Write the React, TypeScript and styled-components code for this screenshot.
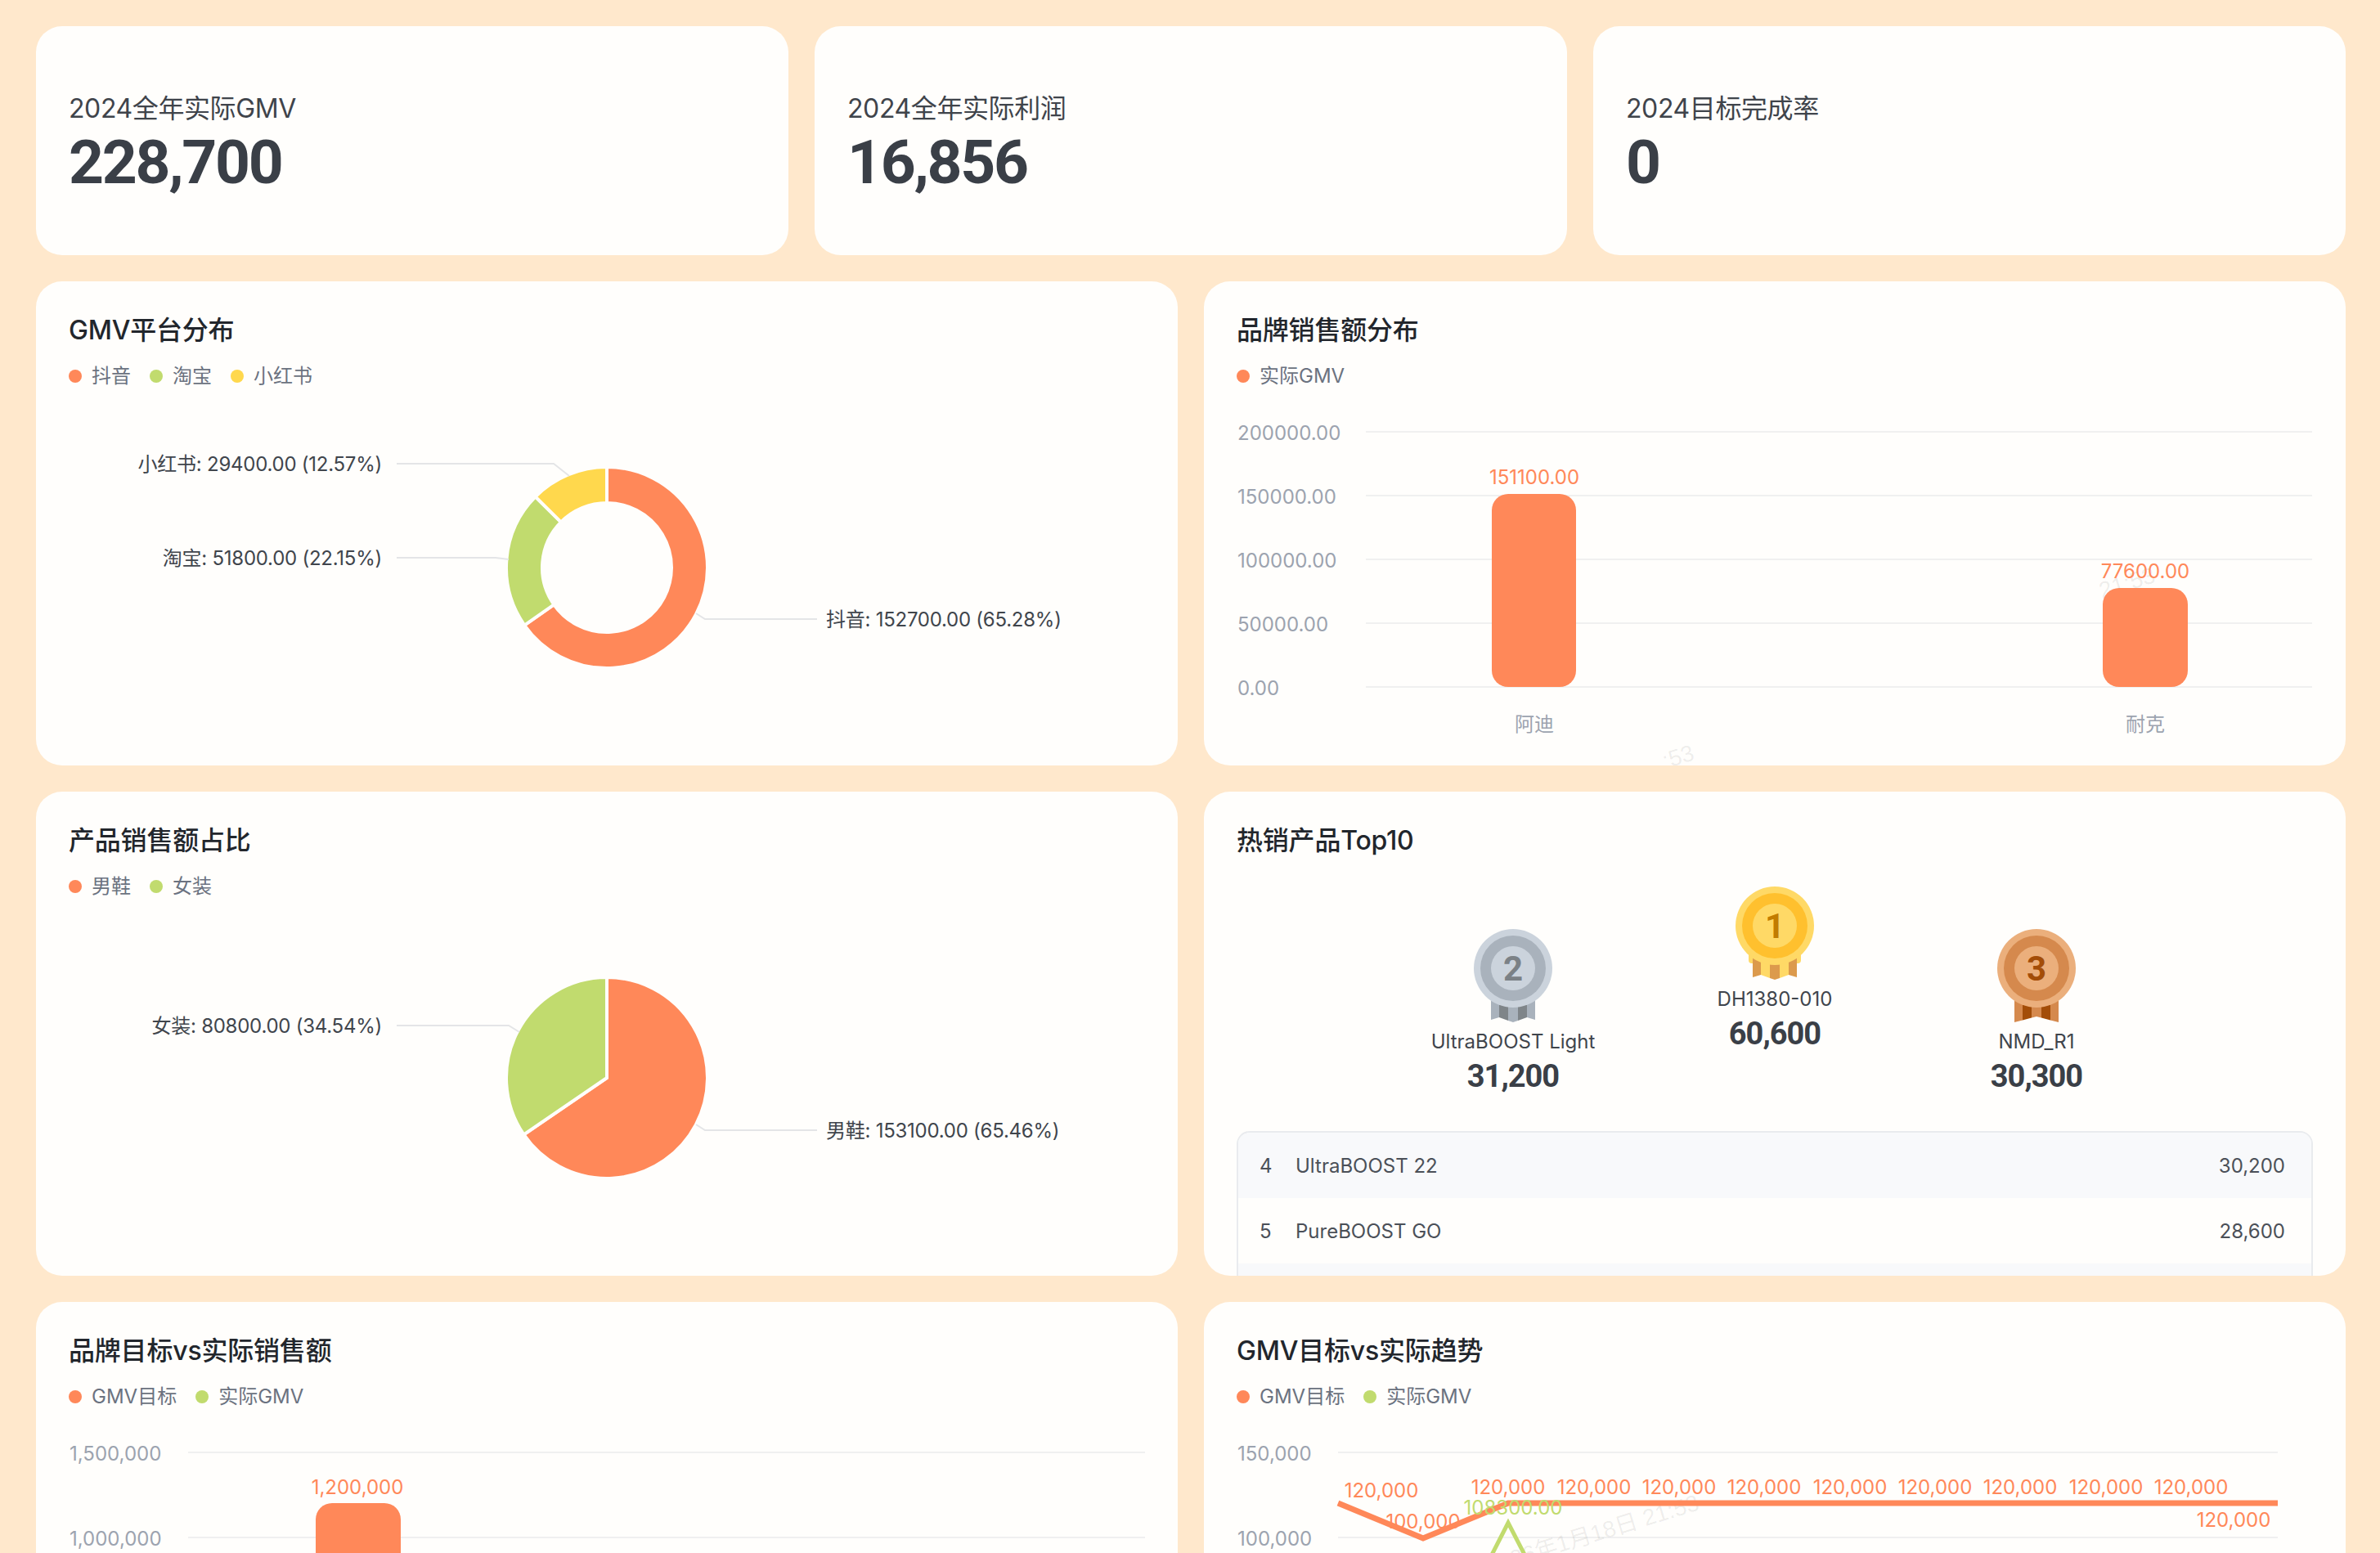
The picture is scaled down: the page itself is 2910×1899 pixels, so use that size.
import React from 'react';
import styled, { createGlobalStyle } from 'styled-components';

const ORANGE = '#ff8859';
const GREEN = '#c1db6e';
const YELLOW = '#ffd84d';
const CARD_BG = '#fffefc';
const FONT = 'Inter, "Noto Sans CJK SC", sans-serif';

const GlobalStyle = createGlobalStyle`
  html, body {
    margin: 0;
    padding: 0;
    height: 1899px;
    overflow: hidden;
    background: #ffe8cc;
    font-family: ${FONT};
  }
`;

const Page = styled.div`
  height: 1899px;
  overflow: hidden;
  box-sizing: border-box;
  padding: 32px 42px 0 44px;
  display: flex;
  flex-direction: column;
  gap: 32px;
`;

const StatRow = styled.div`
  display: grid;
  grid-template-columns: repeat(3, 920px);
  gap: 32px;
`;

const StatCard = styled.div`
  height: 280px;
  box-sizing: border-box;
  padding: 79px 40px 0;
  border-radius: 32px;
  background: ${CARD_BG};
`;

const StatLabel = styled.div`
  font-size: 32px;
  line-height: 44px;
  letter-spacing: -0.4px;
  color: #3f444b;
`;

const StatValue = styled.div`
  font-family: Roboto, sans-serif;
  font-weight: 700;
  font-size: 75px;
  line-height: 86px;
  letter-spacing: -2.3px;
  color: #3a3f47;
`;

const ChartGrid = styled.div`
  display: grid;
  grid-template-columns: repeat(2, 1396px);
  grid-auto-rows: 592px;
  gap: 32px;
`;

const ChartCard = styled.section`
  position: relative;
  box-sizing: border-box;
  padding: 38px 40px 0;
  border-radius: 32px;
  background: ${CARD_BG};
  overflow: hidden;
`;

const CardTitle = styled.h3`
  margin: 0;
  font-size: 32px;
  line-height: 44px;
  font-weight: 500;
  letter-spacing: -0.2px;
  color: #22262c;
`;

const Legend = styled.div`
  display: flex;
  gap: 23px;
  margin-top: 18px;
  height: 32px;
`;

const LegendItem = styled.div`
  display: flex;
  align-items: center;
  gap: 12px;
  font-size: 24px;
  line-height: 32px;
  color: #6b7280;
`;

const LegendDot = styled.span<{ $color: string }>`
  width: 16px;
  height: 16px;
  border-radius: 50%;
  background: ${(p) => p.$color};
`;

const ChartSvg = styled.svg`
  display: block;
  margin: 0 -40px;
  width: 1396px;
  height: 460px;
`;

const SliceLabel = styled.text`
  font-size: 24px;
  letter-spacing: -0.25px;
  fill: #40454c;
  dominant-baseline: central;
`;

const AxisLabel = styled.text`
  font-size: 24px;
  fill: #9ca3af;
  dominant-baseline: central;
  transform: translateY(1px);
`;

const ValueLabel = styled.text<{ $color?: string }>`
  font-size: 24px;
  fill: ${(p) => p.$color || ORANGE};
  text-anchor: middle;
  dominant-baseline: central;
`;

const WatermarkText = styled.text`
  font-family: "Liberation Sans", "Noto Sans CJK SC", sans-serif;
  font-size: 28px;
  fill: rgba(0, 0, 0, 0.08);
`;

const Podium = styled.div`
  display: flex;
  justify-content: center;
  align-items: flex-start;
  margin: 34px 0 45px;
`;

const PodiumItem = styled.div<{ $lowered?: boolean }>`
  width: 320px;
  margin-top: ${(p) => (p.$lowered ? '52px' : '0')};
  display: flex;
  flex-direction: column;
  align-items: center;
`;

const PodiumName = styled.div`
  margin-top: 8px;
  font-size: 24px;
  line-height: 32px;
  color: #40454c;
`;

const PodiumValue = styled.div`
  margin-top: 4px;
  font-family: Roboto, sans-serif;
  font-weight: 700;
  font-size: 38px;
  line-height: 44px;
  letter-spacing: -1px;
  color: #3a3f47;
`;

const RankTable = styled.div`
  border: 2px solid #e9ebee;
  border-radius: 16px;
  overflow: hidden;
`;

const RankRow = styled.div<{ $striped?: boolean }>`
  height: 80px;
  padding: 0 32px 0 26px;
  display: flex;
  align-items: center;
  font-size: 24px;
  color: #4b5058;
  background: ${(p) => (p.$striped ? '#f8f9fb' : CARD_BG)};
`;

const RankNumber = styled.span`
  width: 44px;
`;

const RankName = styled.span`
  flex: 1;
`;

type MedalTheme = {
  outer: string;
  mid: string;
  digit: string;
  ribbon: string;
  stripe: string;
  notched?: boolean;
  tab?: boolean;
};

const GOLD: MedalTheme = { outer: '#ffd966', mid: '#ffc02e', digit: '#c27c00', ribbon: '#dc9a4c', stripe: '#ffd966', tab: true };
const SILVER: MedalTheme = { outer: '#cbd3dc', mid: '#a9b2bc', digit: '#7b8186', ribbon: '#a9b2bc', stripe: '#7f8589' };
const BRONZE: MedalTheme = { outer: '#ebaf7c', mid: '#d5894d', digit: '#a34d08', ribbon: '#d5894d', stripe: '#a34d08', notched: true };

// bottom edge of the ribbon, either pointing down in the middle or cut upwards
const ribbonBottom = (x: number, notched?: boolean) => {
  if (notched) return 114 - (7 * (48 - Math.abs(x - 48) - 21)) / 27;
  const d = Math.abs(x - 48);
  if (d > 17) return 108 + ((d - 17) / 10) * 3;
  return 114 - (d / 17) * 6;
};

const Medal: React.FC<{ rank: number; theme: MedalTheme }> = ({ rank, theme }) => {
  const edges = [21, 31, 42, 54, 65, 75];
  return (
    <svg width="96" height="114" viewBox="0 0 96 114">
      {theme.tab && <rect x="16" y="70" width="64" height="24" rx="4" fill={theme.outer} />}
      {edges.slice(0, 5).map((x, i) => {
        const next = edges[i + 1];
        const mid = i === 2 ? ` 48,${ribbonBottom(48, theme.notched)}` : '';
        return (
          <polygon
            key={x}
            points={`${x},70 ${next},70 ${next},${ribbonBottom(next, theme.notched)}${mid} ${x},${ribbonBottom(x, theme.notched)}`}
            fill={i % 2 === 0 ? theme.ribbon : theme.stripe}
          />
        );
      })}
      <circle cx="48" cy="48" r="48" fill={theme.outer} />
      <circle cx="48" cy="48" r="40" fill={theme.mid} />
      <circle cx="48" cy="48" r="27" fill={theme.outer} />
      <text x="48" y="63" textAnchor="middle" fontFamily="Roboto, sans-serif" fontWeight="700" fontSize="42" fill={theme.digit}>
        {rank}
      </text>
    </svg>
  );
};

const polar = (cx: number, cy: number, r: number, fraction: number) => {
  const a = fraction * 2 * Math.PI;
  return [cx + r * Math.sin(a), cy - r * Math.cos(a)];
};

const slicePath = (cx: number, cy: number, outer: number, inner: number, from: number, to: number) => {
  const large = to - from > 0.5 ? 1 : 0;
  const [x1, y1] = polar(cx, cy, outer, from);
  const [x2, y2] = polar(cx, cy, outer, to);
  if (inner === 0) return `M${cx} ${cy}L${x1} ${y1}A${outer} ${outer} 0 ${large} 1 ${x2} ${y2}Z`;
  const [x3, y3] = polar(cx, cy, inner, to);
  const [x4, y4] = polar(cx, cy, inner, from);
  return `M${x1} ${y1}A${outer} ${outer} 0 ${large} 1 ${x2} ${y2}L${x3} ${y3}A${inner} ${inner} 0 ${large} 0 ${x4} ${y4}Z`;
};

type Slice = {
  color: string;
  share: number;
  text: string;
  line: string;
  labelX: number;
  labelY: number;
  anchor: 'start' | 'end';
};

const PieChart: React.FC<{ top: number; inner: number; cy: number; slices: Slice[] }> = ({ top, inner, cy, slices }) => {
  let acc = 0;
  return (
    <ChartSvg viewBox={`44 ${top + 132} 1396 460`}>
      {slices.map((s) => {
        const from = acc;
        acc += s.share;
        return (
          <path
            key={s.text}
            d={slicePath(742, cy, 123, inner, from, acc)}
            fill={s.color}
            stroke={CARD_BG}
            strokeWidth="4"
          />
        );
      })}
      {slices.map((s) => (
        <React.Fragment key={s.text}>
          <polyline points={s.line} fill="none" stroke="#e4e5e7" strokeWidth="2" />
          <SliceLabel x={s.labelX} y={s.labelY} textAnchor={s.anchor}>
            {s.text}
          </SliceLabel>
        </React.Fragment>
      ))}
    </ChartSvg>
  );
};

const GridLine: React.FC<{ x1: number; x2: number; y: number }> = ({ x1, x2, y }) => (
  <line x1={x1} x2={x2} y1={y} y2={y} stroke="#f0f0f0" strokeWidth="2" />
);

const BrandBars = () => (
  <ChartSvg viewBox={`1472 476 1396 460`}>
    {[
      ['200000.00', 528],
      ['150000.00', 606],
      ['100000.00', 684],
      ['50000.00', 762],
      ['0.00', 840],
    ].map(([label, y]) => (
      <React.Fragment key={label}>
        <AxisLabel x={1513} y={y}>{label}</AxisLabel>
        <GridLine x1={1670} x2={2827} y={y as number} />
      </React.Fragment>
    ))}
    <WatermarkText x="2570" y="732" transform="rotate(-17 2570 732)">21:53</WatermarkText>
    <WatermarkText x="2036" y="940" transform="rotate(-17 2036 940)">:53</WatermarkText>
    <rect x="1824" y="604" width="103" height="236" rx="20" fill={ORANGE} />
    <rect x="2571" y="719" width="104" height="121" rx="20" fill={ORANGE} />
    <ValueLabel x={1876} y={583}>151100.00</ValueLabel>
    <ValueLabel x={2623} y={698}>77600.00</ValueLabel>
    <AxisLabel x={1876} y={884} textAnchor="middle">阿迪</AxisLabel>
    <AxisLabel x={2623} y={884} textAnchor="middle">耐克</AxisLabel>
  </ChartSvg>
);

const TargetBars = () => (
  <ChartSvg viewBox={`44 1724 1396 460`}>
    <AxisLabel x={85} y={1776}>1,500,000</AxisLabel>
    <AxisLabel x={85} y={1880}>1,000,000</AxisLabel>
    <GridLine x1={230} x2={1400} y={1776} />
    <GridLine x1={230} x2={1400} y={1880} />
    <rect x="386" y="1838" width="104" height="300" rx="20" fill={ORANGE} />
    <ValueLabel x={437} y={1818}>1,200,000</ValueLabel>
  </ChartSvg>
);

const TREND_X = [1844, 1949, 2053, 2157, 2262, 2366, 2470, 2575, 2679];

const TrendLines = () => (
  <ChartSvg viewBox={`1472 1724 1396 460`}>
    <AxisLabel x={1513} y={1776}>150,000</AxisLabel>
    <AxisLabel x={1513} y={1880}>100,000</AxisLabel>
    <GridLine x1={1636} x2={2785} y={1776} />
    <GridLine x1={1636} x2={2785} y={1880} />
    <WatermarkText x="1820" y="1925" transform="rotate(-17 1820 1925)">2026年1月18日 21:53</WatermarkText>
    <polyline points="1740,2066 1844,1862 1949,2066" fill="none" stroke={GREEN} strokeWidth="5" />
    <polyline points="1636,1838 1740,1881 1844,1838 2785,1838" fill="none" stroke={ORANGE} strokeWidth="7" />
    <ValueLabel x={1689} y={1822}>120,000</ValueLabel>
    <ValueLabel x={1740} y={1860}>100,000</ValueLabel>
    {TREND_X.map((x) => (
      <ValueLabel key={x} x={x} y={1818}>120,000</ValueLabel>
    ))}
    <ValueLabel x={2731} y={1858}>120,000</ValueLabel>
    <ValueLabel x={1850} y={1843} $color={GREEN}>108300.00</ValueLabel>
  </ChartSvg>
);

const LegendRow: React.FC<{ items: [string, string][] }> = ({ items }) => (
  <Legend>
    {items.map(([color, label]) => (
      <LegendItem key={label}>
        <LegendDot $color={color} />
        {label}
      </LegendItem>
    ))}
  </Legend>
);

const platformSlices: Slice[] = [
  { color: ORANGE, share: 0.6528, text: '抖音: 152700.00 (65.28%)', line: '851,750 862,757 999,757', labelX: 1010, labelY: 757, anchor: 'start' },
  { color: GREEN, share: 0.2215, text: '淘宝: 51800.00 (22.15%)', line: '622,684 606,682 485,682', labelX: 467, labelY: 682, anchor: 'end' },
  { color: YELLOW, share: 0.1257, text: '小红书: 29400.00 (12.57%)', line: '696,582 677,567 485,567', labelX: 467, labelY: 567, anchor: 'end' },
];

const productSlices: Slice[] = [
  { color: ORANGE, share: 0.6546, text: '男鞋: 153100.00 (65.46%)', line: '851,1375 862,1382 999,1382', labelX: 1010, labelY: 1382, anchor: 'start' },
  { color: GREEN, share: 0.3454, text: '女装: 80800.00 (34.54%)', line: '635,1262 622,1254 485,1254', labelX: 467, labelY: 1254, anchor: 'end' },
];

const App: React.FC = () => (
  <Page>
    <GlobalStyle />
    <StatRow>
      <StatCard>
        <StatLabel>2024全年实际GMV</StatLabel>
        <StatValue>228,700</StatValue>
      </StatCard>
      <StatCard>
        <StatLabel>2024全年实际利润</StatLabel>
        <StatValue>16,856</StatValue>
      </StatCard>
      <StatCard>
        <StatLabel>2024目标完成率</StatLabel>
        <StatValue>0</StatValue>
      </StatCard>
    </StatRow>
    <ChartGrid>
      <ChartCard>
        <CardTitle>GMV平台分布</CardTitle>
        <LegendRow items={[[ORANGE, '抖音'], [GREEN, '淘宝'], [YELLOW, '小红书']]} />
        <PieChart top={344} inner={79} cy={694} slices={platformSlices} />
      </ChartCard>
      <ChartCard>
        <CardTitle>品牌销售额分布</CardTitle>
        <LegendRow items={[[ORANGE, '实际GMV']]} />
        <BrandBars />
      </ChartCard>
      <ChartCard>
        <CardTitle>产品销售额占比</CardTitle>
        <LegendRow items={[[ORANGE, '男鞋'], [GREEN, '女装']]} />
        <PieChart top={968} inner={0} cy={1318} slices={productSlices} />
      </ChartCard>
      <ChartCard>
        <CardTitle>热销产品Top10</CardTitle>
        <Podium>
          <PodiumItem $lowered>
            <Medal rank={2} theme={SILVER} />
            <PodiumName>UltraBOOST Light</PodiumName>
            <PodiumValue>31,200</PodiumValue>
          </PodiumItem>
          <PodiumItem>
            <Medal rank={1} theme={GOLD} />
            <PodiumName>DH1380-010</PodiumName>
            <PodiumValue>60,600</PodiumValue>
          </PodiumItem>
          <PodiumItem $lowered>
            <Medal rank={3} theme={BRONZE} />
            <PodiumName>NMD_R1</PodiumName>
            <PodiumValue>30,300</PodiumValue>
          </PodiumItem>
        </Podium>
        <RankTable>
          <RankRow $striped>
            <RankNumber>4</RankNumber>
            <RankName>UltraBOOST 22</RankName>
            <span>30,200</span>
          </RankRow>
          <RankRow>
            <RankNumber>5</RankNumber>
            <RankName>PureBOOST GO</RankName>
            <span>28,600</span>
          </RankRow>
          <RankRow $striped />
        </RankTable>
      </ChartCard>
      <ChartCard>
        <CardTitle>品牌目标vs实际销售额</CardTitle>
        <LegendRow items={[[ORANGE, 'GMV目标'], [GREEN, '实际GMV']]} />
        <TargetBars />
      </ChartCard>
      <ChartCard>
        <CardTitle>GMV目标vs实际趋势</CardTitle>
        <LegendRow items={[[ORANGE, 'GMV目标'], [GREEN, '实际GMV']]} />
        <TrendLines />
      </ChartCard>
    </ChartGrid>
  </Page>
);

export default App;
